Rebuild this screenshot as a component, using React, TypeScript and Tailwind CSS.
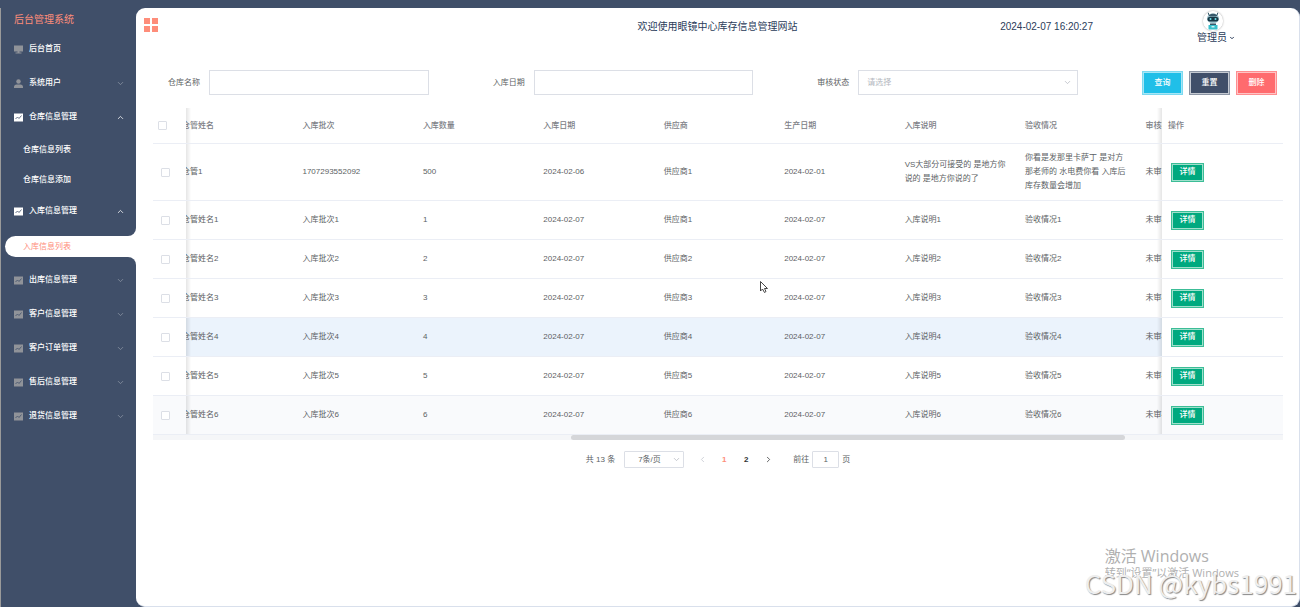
import React, { useLayoutEffect, useRef } from 'react';
import { ChevronDown, ChevronLeft, ChevronRight, ChevronUp } from 'lucide-react';
import clsx from 'clsx';

interface MenuItem {
  label: string;
  icon: 'monitor' | 'user' | 'chart';
  open?: boolean;
  children?: string[];
}

const menu: MenuItem[] = [
  { label: '后台首页', icon: 'monitor' },
  { label: '系统用户', icon: 'user', children: [] },
  { label: '仓库信息管理', icon: 'chart', open: true, children: ['仓库信息列表', '仓库信息添加'] },
  { label: '入库信息管理', icon: 'chart', open: true, children: ['入库信息列表'] },
  { label: '出库信息管理', icon: 'chart', children: [] },
  { label: '客户信息管理', icon: 'chart', children: [] },
  { label: '客户订单管理', icon: 'chart', children: [] },
  { label: '售后信息管理', icon: 'chart', children: [] },
  { label: '退货信息管理', icon: 'chart', children: [] },
];

const activeItem = '入库信息列表';

const columns = ['仓管姓名', '入库批次', '入库数量', '入库日期', '供应商', '生产日期', '入库说明', '验收情况', '审核状态'];

const rows = [
  [
    '仓管1',
    '1707293552092',
    '500',
    '2024-02-06',
    '供应商1',
    '2024-02-01',
    'VS大部分可接受的 是地方你说的 是地方你说的了',
    '你看是发那里卡萨丁 是对方那老师的 水电费你看 入库后库存数量会增加',
    '未审核',
  ],
  ...[1, 2, 3, 4, 5, 6].map((n) => [
    `仓管姓名${n}`,
    `入库批次${n}`,
    `${n}`,
    '2024-02-07',
    `供应商${n}`,
    '2024-02-07',
    `入库说明${n}`,
    `验收情况${n}`,
    '未审核',
  ]),
];

// edge shadows of the fixed columns
const fixedLeft =
  'sticky left-0 z-10 border-b border-[#ebeef5] after:absolute after:inset-y-0 after:left-full after:w-[5px] after:bg-linear-to-r after:from-black/10 after:to-transparent';
const fixedRight =
  'sticky right-0 z-10 border-b border-[#ebeef5] before:absolute before:inset-y-0 before:right-full before:w-[5px] before:bg-linear-to-l before:from-black/10 before:to-transparent';

const MenuIcon: React.FC<{ name: MenuItem['icon']; className?: string }> = ({ name, className }) => (
  <svg viewBox="0 0 18 18" className={clsx('size-[9px] shrink-0', className)} fill="currentColor" aria-hidden="true">
    {name === 'monitor' && <path d="M0 1h18v12h-7v2h4v2H3v-2h4v-2H0z" />}
    {name === 'user' && (
      <>
        <circle cx="9" cy="5" r="4.5" />
        <path d="M0 18v-2c0-3 2-5 5-5h8c3 0 5 2 5 5v2z" />
      </>
    )}
    {name === 'chart' && (
      <>
        <path d="M0 1h18v16H0z" />
        <path d="M3 12l4-4 3 3 5-6" fill="none" stroke="#404f69" strokeWidth="1.6" />
      </>
    )}
  </svg>
);

const Sidebar: React.FC = () => (
  <aside className="w-[136px] shrink-0 border-l border-[#9a9a9a]">
    <h1 className="h-6 pl-[13px] text-[10px] leading-6 text-[#fe8d7a]">后台管理系统</h1>
    <nav>
      {menu.map((item) => (
        <div key={item.label}>
          <button className="flex h-[34px] w-full items-center pr-[11px] pl-[13px] font-medium text-white">
            <MenuIcon name={item.icon} className={item.open ? 'text-white' : 'text-[#909399]'} />
            <span className="ml-[6px]">{item.label}</span>
            {item.children &&
              (item.open ? (
                <ChevronUp className="ml-auto size-[9px]" />
              ) : (
                <ChevronDown className="ml-auto size-[9px] text-[#8e97a6]" />
              ))}
          </button>
          {item.open &&
            item.children?.map((child) =>
              child === activeItem ? (
                <a
                  key={child}
                  href="#"
                  className="relative mt-2 mb-[6px] ml-1 block h-[21px] rounded-l-full bg-white pl-[18px] leading-[21px] text-[#fe8d7a] before:absolute before:-top-2 before:right-0 before:size-2 before:rounded-br-lg before:shadow-[4px_4px_0_4px_white] after:absolute after:right-0 after:-bottom-2 after:size-2 after:rounded-tr-lg after:shadow-[4px_-4px_0_4px_white]"
                >
                  {child}
                </a>
              ) : (
                <a key={child} href="#" className="block h-[30px] pl-[22px] leading-[31px] font-medium text-white">
                  {child}
                </a>
              )
            )}
        </div>
      ))}
    </nav>
  </aside>
);

const Avatar: React.FC = () => (
  <svg viewBox="0 0 40 40" className="ml-[6px] size-5 rounded-full shadow-[0_0_2px_#999]" aria-hidden="true">
    <circle cx="20" cy="20" r="20" fill="#fff" />
    <path d="M12 8L10 3M28 8l2-5" stroke="#294b5c" strokeWidth="2" />
    <ellipse cx="20" cy="15" rx="12" ry="10" fill="#9fc4cf" />
    <path d="M11 9c5-5 13-5 18 0l-3 2H14z" fill="#35586a" />
    <rect x="9" y="12" width="22" height="9" rx="4" fill="#173745" />
    <circle cx="15" cy="16" r="2" fill="#6fe0ea" />
    <circle cx="25" cy="16" r="2" fill="#6fe0ea" />
    <path d="M14 25h12v4H14z" fill="#35586a" />
    <path d="M11 28h18v9H11z" fill="#38bfcb" />
    <path d="M17 30h6v3h-6z" fill="#c9f4f6" />
  </svg>
);

const Header: React.FC = () => (
  <header className="grid h-[38px] grid-cols-[1fr_auto_1fr] items-center text-[10px] text-[#2b3c5a]">
    <button aria-label="菜单" className="-mt-1 ml-2 grid grid-cols-2 gap-[2px] justify-self-start">
      <span className="size-[6px] bg-[#fe8d7a]" />
      <span className="size-[6px] bg-[#fe8d7a]" />
      <span className="size-[6px] bg-[#fe8d7a]" />
      <span className="size-[6px] bg-[#fe8d7a]" />
    </button>
    <p>欢迎使用眼镜中心库存信息管理网站</p>
    <div className="flex items-center justify-end">
      <time className="whitespace-nowrap">2024-02-07 16:20:27</time>
      <button className="mr-16 ml-[104px] flex flex-col items-start">
        <Avatar />
        <span className="mt-px flex items-center leading-3">
          管理员
          <ChevronDown className="ml-[2px] size-[6px]" strokeWidth={4} />
        </span>
      </button>
    </div>
  </header>
);

const Filters: React.FC = () => (
  <form className="mt-6 flex items-center pr-[6px] pl-[15px]">
    <div className="flex flex-1 items-center pr-16">
      <label htmlFor="warehouse" className="w-[41px]">仓库名称</label>
      <input id="warehouse" className="h-[25px] min-w-0 flex-1 border border-[#dcdfe6] px-2 outline-none" />
    </div>
    <div className="flex flex-1 items-center pr-16">
      <label htmlFor="date" className="w-[41px]">入库日期</label>
      <input id="date" className="h-[25px] min-w-0 flex-1 border border-[#dcdfe6] px-2 outline-none" />
    </div>
    <div className="flex flex-1 items-center pr-16">
      <label htmlFor="status" className="w-[41px]">审核状态</label>
      <div className="relative flex flex-1">
        <select
          id="status"
          className="h-[25px] w-full appearance-none border border-[#dcdfe6] px-2 text-[#b4b8c0] outline-none"
        >
          <option>请选择</option>
        </select>
        <ChevronDown className="pointer-events-none absolute top-2 right-[6px] size-[9px] text-[#b4b8c0]" />
      </div>
    </div>
    <div className="flex gap-[6px] font-medium text-white">
      <button type="button" className="h-6 w-[41px] border border-[#7cd9f0] bg-[#20bfe8] inset-ring inset-ring-[#a6e6f6]">
        查询
      </button>
      <button type="button" className="h-6 w-[41px] border border-[#8d96a5] bg-[#404f69] inset-ring inset-ring-[#c5cad2]">
        重置
      </button>
      <button type="button" className="h-6 w-[41px] border border-[#ff8e90] bg-[#ff6b6e] inset-ring inset-ring-[#ffc4c5]">
        删除
      </button>
    </div>
  </form>
);

const Checkbox: React.FC<{ label: string }> = ({ label }) => (
  <input
    type="checkbox"
    aria-label={label}
    className="block size-[9px] appearance-none rounded-[1px] border border-[#dcdfe6] bg-white"
  />
);

const StockTable: React.FC = () => {
  const scroller = useRef<HTMLDivElement>(null);

  useLayoutEffect(() => {
    if (scroller.current) scroller.current.scrollLeft = 12;
  }, []);

  return (
    <div className="mt-[13px]">
      <div ref={scroller} className="overflow-x-auto [scrollbar-width:none]">
        <table className="w-[1238px] min-w-full table-fixed border-separate border-spacing-0 text-left">
          <colgroup>
            <col className="w-[33px]" />
            {columns.map((c) => (
              <col key={c} />
            ))}
            <col className="w-[121px]" />
          </colgroup>
          <thead className="text-[#7d8086]">
            <tr className="h-9">
              <th className={clsx(fixedLeft, 'bg-white pl-[5px]')}>
                <Checkbox label="全选" />
              </th>
              {columns.map((c) => (
                <th key={c} className="border-b border-[#ebeef5] px-2 font-medium">
                  {c}
                </th>
              ))}
              <th className={clsx(fixedRight, 'bg-white px-[6px] font-medium')}>操作</th>
            </tr>
          </thead>
          <tbody>
            {rows.map((row, i) => {
              const fixedBg = i === 6 ? 'bg-[#f9fafc]' : 'bg-white';
              return (
                <tr
                  key={row[0]}
                  className={clsx(i === 0 ? 'h-[57px]' : 'h-[39px]', i === 4 && 'bg-[#ebf3fc]', i === 6 && 'bg-[#f9fafc]')}
                >
                  <td className={clsx(fixedLeft, fixedBg, 'pl-2')}>
                    <Checkbox label={row[0]} />
                  </td>
                  {row.map((cell, j) => (
                    <td key={j} className="border-b border-[#ebeef5] px-2 leading-[14px]">
                      {cell}
                    </td>
                  ))}
                  <td className={clsx(fixedRight, fixedBg, 'px-[9px]')}>
                    <button className="block h-[19px] w-[33px] border border-[#3cbd97] bg-[#00a97f] font-medium text-white inset-ring inset-ring-[#9fe0cc]">
                      详情
                    </button>
                  </td>
                </tr>
              );
            })}
          </tbody>
        </table>
      </div>
      <div className="flex h-[5px] bg-[#f5f6f8]">
        <div className="ml-[37%] w-[49%] rounded-sm bg-[#d5d6d9]" />
      </div>
    </div>
  );
};

const Pagination: React.FC = () => (
  <div className="mt-[11px] flex items-center justify-center">
    <span>共 13 条</span>
    <div className="relative ml-[9px] flex">
      <select
        aria-label="每页条数"
        className="h-[17px] w-[60px] appearance-none rounded-[1px] border border-[#dcdfe6] pl-[13px] outline-none"
      >
        <option>7条/页</option>
      </select>
      <ChevronDown className="pointer-events-none absolute top-1 right-[3px] size-[9px] text-[#b4b8c0]" />
    </div>
    <div className="ml-[7px] flex items-center font-bold text-[#303133]">
      <button aria-label="上一页" className="flex w-[22px] justify-center text-[#c0c4cc]">
        <ChevronLeft className="size-[9px]" />
      </button>
      <button className="w-[22px] text-[#fe8d7a]">1</button>
      <button className="w-[22px]">2</button>
      <button aria-label="下一页" className="flex w-[22px] justify-center">
        <ChevronRight className="size-[9px]" />
      </button>
    </div>
    <label htmlFor="page" className="ml-[14px]">前往</label>
    <input
      id="page"
      defaultValue="1"
      className="mx-[3px] h-[17px] w-[27px] rounded-[1px] border border-[#dcdfe6] text-center outline-none"
    />
    <span>页</span>
  </div>
);

export default function App() {
  return (
    <div className="relative flex min-h-screen overflow-hidden bg-[#404f69] font-['Liberation_Sans','Noto_Sans_CJK_SC',sans-serif] text-[8px] leading-3 text-[#5c5f64]">
      <div className="flex min-w-0 flex-1 pt-2">
        <Sidebar />
        <main className="min-w-0 flex-1 rounded-[9px] border-r border-b border-[#d9e0ec] bg-white">
          <Header />
          <div className="pr-4 pl-[17px]">
            <Filters />
            <StockTable />
            <Pagination />
          </div>
        </main>
      </div>

      <svg viewBox="0 0 16 24" className="absolute top-[281px] left-[760px] h-3 w-2" aria-hidden="true">
        <path d="M1 1v19l4-4 4 7 3-2-3-6h6z" fill="#fff" stroke="#333" strokeWidth="1.8" />
      </svg>

      <div className="pointer-events-none absolute right-[61px] bottom-[27px] font-['Open_Sans','Noto_Sans_CJK_SC',sans-serif] text-[#b0b0b0]">
        <p className="text-[16px] leading-5">激活 Windows</p>
        <p className="text-[11px] leading-[14px]">转到“设置”以激活 Windows</p>
      </div>
      <p className="pointer-events-none absolute right-[3px] bottom-[6px] font-['Noto_Sans_CJK_SC',sans-serif] text-[26px] leading-9 text-[#eeeeee] [text-shadow:1px_1px_1px_#888]">
        CSDN @kybs1991
      </p>
    </div>
  );
}
